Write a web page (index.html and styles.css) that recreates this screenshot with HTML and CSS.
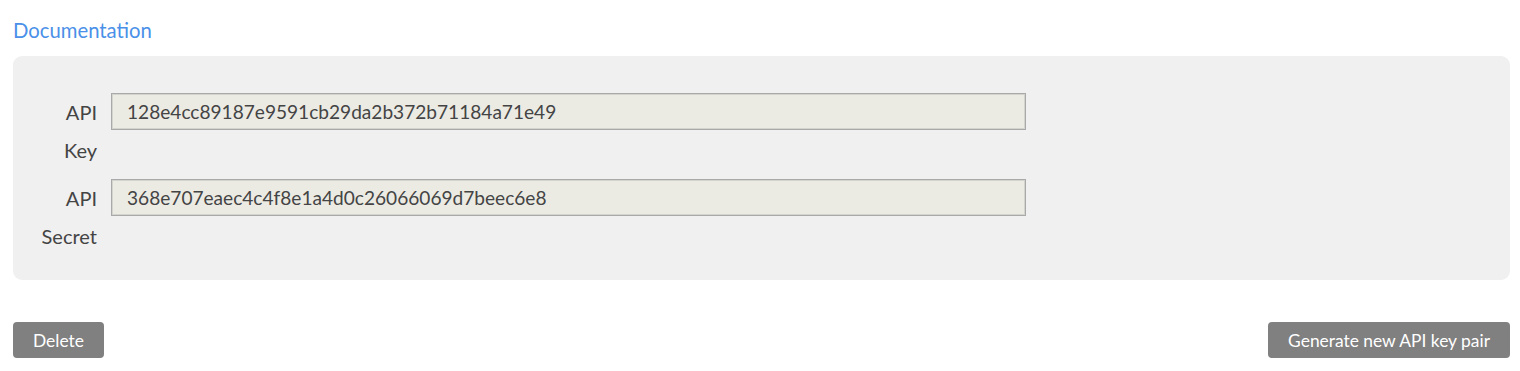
FILE: index.html
```html
<!DOCTYPE html>
<html lang="en">
<head>
  <meta charset="UTF-8" />
  <meta name="viewport" content="width=device-width, initial-scale=1.0"/>
  <title>API Keys</title>
  <link rel="stylesheet" href="styles.css">
</head>
<body>

  <div class="page">
    <a class="doc-link" href="#">Documentation</a>

    <div class="key-panel">
      <div class="key-row">
        <label class="key-label" for="apiKey">API Key</label>
        <input class="key-input" type="text" id="apiKey" value="128e4cc89187e9591cb29da2b372b71184a71e49" disabled>
      </div>

      <div class="key-row">
        <label class="key-label" for="apiSecret">API Secret</label>
        <input class="key-input" type="text" id="apiSecret" value="368e707eaec4c4f8e1a4d0c26066069d7beec6e8" disabled>
      </div>
    </div>

    <!-- Actions -->
    <div class="actions">
      <button class="btn">Delete</button>
      <button class="btn">Generate new API key pair</button>
    </div>
  </div>

</body>
</html>
```

FILE: styles.css
```css
body {
  margin: 0;
  font-family: 'Lato', sans-serif;
  background-color: #ffffff;
  color: #444;
}

.page {
  padding: 18px 10px 0 13px;
}

.doc-link {
  display: block;
  font-size: 20.3px;
  line-height: 24px;
  color: #4a90e8;
  text-decoration: none;
  margin-bottom: 14px;
}

.key-panel {
  background: #f0f0f0;
  border-radius: 9px;
  padding: 37px 0 25px 24px;
}

.key-row {
  display: flex;
  align-items: flex-start;
  gap: 14px;
  margin-bottom: 10px;
}

.key-row:last-child {
  margin-bottom: 0;
}

.key-label {
  width: 60px;
  text-align: right;
  font-size: 20px;
  line-height: 38px;
  color: #444;
}

.key-input {
  box-sizing: border-box;
  width: 915px;
  height: 37px;
  padding: 0 15px;
  font-family: 'Lato', sans-serif;
  font-size: 19.1px;
  color: #444;
  background-color: #ebebe4;
  border: 1px solid #a9a9a9;
  box-shadow: inset 0 0 0 1px #d4d4ce;
  margin: 0;
}

.actions {
  display: flex;
  justify-content: space-between;
  margin-top: 42px;
}

.btn {
  height: 36px;
  padding: 0 20px;
  font-family: 'Lato', sans-serif;
  font-size: 17.4px;
  color: #ffffff;
  background-color: #808080;
  border: none;
  border-radius: 4px;
  cursor: pointer;
}

.btn:hover {
  background-color: #6e6e6e;
}
```
